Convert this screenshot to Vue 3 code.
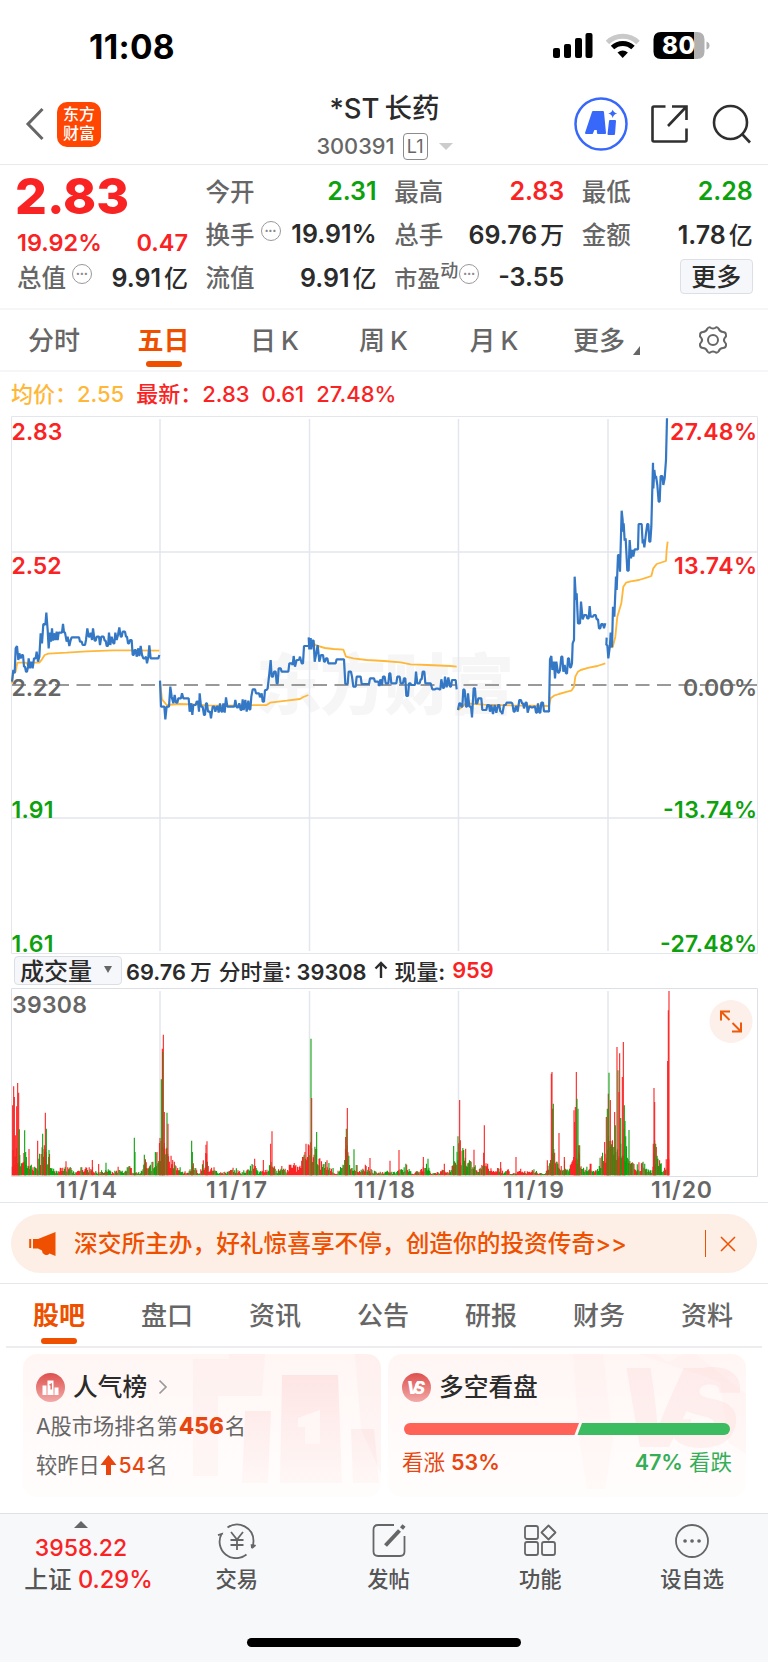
<script setup>
import { ref } from "vue";

const periods = ["分时", "五日", "日 K", "周 K", "月 K", "更多"];
const activePeriod = ref("五日");
const sections = ["股吧", "盘口", "资讯", "公告", "研报", "财务", "资料"];
const activeSection = ref("股吧");

// chart data is kept in thirds of a pixel
const days = [
    [36, 815, 40, 780, 44, 790, 47, 715, 51, 708, 55, 750, 58, 730, 62, 745, 66, 735, 72, 770, 78, 785, 84, 770, 86, 745, 90, 775, 94, 755, 98, 775, 102, 745, 110, 725, 114, 755, 118, 740, 122, 670, 126, 700, 130, 642, 136, 645, 139, 608, 143, 660, 146, 715, 150, 668, 153, 695, 156, 655, 159, 692, 162, 670, 166, 690, 170, 665, 173, 690, 176, 668, 186, 668, 189, 642, 192, 667, 195, 668, 200, 695, 203, 680, 208, 708, 212, 690, 215, 682, 232, 682, 240, 695, 248, 705, 258, 690, 262, 655, 266, 680, 272, 668, 276, 690, 279, 655, 284, 692, 290, 680, 300, 705, 304, 680, 314, 692, 320, 708, 327, 668, 331, 705, 335, 680, 340, 700, 346, 668, 350, 690, 354, 675, 358, 652, 362, 680, 368, 665, 378, 680, 384, 700, 390, 690, 398, 735, 404, 720, 410, 740, 415, 715, 418, 738, 422, 708, 426, 735, 430, 745, 438, 740, 441, 760, 445, 740, 448, 706, 452, 745, 475, 745, 478, 735],
    [480, 812, 483, 890, 490, 890, 496, 928, 500, 890, 507, 890, 511, 830, 515, 860, 520, 880, 524, 855, 528, 878, 535, 865, 546, 850, 550, 865, 563, 865, 569, 905, 574, 880, 577, 915, 580, 885, 590, 875, 597, 905, 599, 850, 603, 890, 608, 890, 612, 915, 618, 880, 624, 905, 633, 925, 638, 890, 646, 905, 650, 890, 656, 908, 660, 880, 664, 905, 670, 880, 674, 908, 678, 862, 682, 890, 700, 890, 706, 870, 710, 892, 718, 880, 722, 900, 728, 868, 731, 900, 736, 870, 740, 905, 745, 872, 748, 898, 754, 860, 758, 838, 768, 850, 780, 862, 785, 850, 788, 875, 795, 840, 803, 835, 808, 790, 812, 750, 815, 800, 822, 785, 830, 820, 836, 775, 845, 785, 862, 785, 868, 760, 878, 765, 881, 738, 885, 770, 890, 750, 900, 740, 905, 760, 912, 708, 924, 708],
    [926, 682, 928, 718, 932, 684, 934, 718, 937, 692, 944, 755, 948, 735, 953, 705, 958, 755, 963, 735, 972, 755, 978, 745, 985, 760, 1000, 760, 1010, 748, 1032, 748, 1036, 822, 1046, 785, 1056, 800, 1060, 830, 1070, 800, 1085, 822, 1100, 822, 1110, 805, 1125, 815, 1138, 828, 1141, 808, 1146, 825, 1149, 800, 1157, 820, 1168, 790, 1174, 820, 1192, 800, 1202, 820, 1212, 805, 1219, 858, 1227, 820, 1234, 825, 1248, 785, 1252, 820, 1262, 808, 1268, 785, 1276, 820, 1292, 820, 1297, 838, 1308, 836, 1318, 838, 1324, 808, 1329, 834, 1335, 800, 1340, 832, 1345, 802, 1350, 830, 1356, 810, 1370, 838],
    [1374, 900, 1378, 880, 1384, 890, 1390, 838, 1394, 840, 1398, 890, 1404, 850, 1408, 890, 1416, 922, 1421, 835, 1428, 880, 1435, 865, 1447, 900, 1462, 885, 1470, 905, 1474, 885, 1479, 912, 1484, 885, 1489, 908, 1494, 885, 1501, 905, 1507, 912, 1512, 885, 1520, 878, 1537, 880, 1541, 905, 1547, 890, 1553, 905, 1558, 870, 1566, 880, 1572, 895, 1577, 878, 1583, 908, 1588, 890, 1594, 892, 1602, 890, 1608, 908, 1614, 880, 1618, 908, 1624, 878, 1632, 904, 1647, 905, 1650, 748, 1654, 738, 1657, 780, 1662, 755, 1665, 805, 1669, 755, 1674, 788, 1680, 780, 1684, 740, 1690, 785, 1694, 765, 1698, 790, 1704, 745, 1710, 772, 1716, 760, 1718, 700, 1722, 690, 1724, 500, 1728, 570, 1730, 550, 1734, 640, 1743, 575, 1748, 628, 1753, 615, 1762, 625, 1769, 588, 1772, 620, 1782, 615, 1790, 628, 1794, 628, 1797, 655, 1804, 642, 1812, 655, 1816, 640],
    [1820, 683, 1819, 705, 1825, 745, 1830, 705, 1832, 668, 1836, 712, 1839, 590, 1843, 620, 1848, 500, 1850, 540, 1854, 435, 1860, 485, 1865, 302, 1868, 330, 1869, 365, 1871, 340, 1874, 392, 1877, 385, 1882, 482, 1889, 390, 1893, 445, 1897, 420, 1900, 440, 1904, 418, 1914, 418, 1916, 342, 1922, 342, 1928, 400, 1930, 388, 1933, 412, 1938, 370, 1942, 342, 1948, 395, 1954, 350, 1959, 158, 1960, 235, 1963, 180, 1966, 205, 1968, 198, 1972, 225, 1976, 275, 1982, 198, 1990, 225, 1994, 205, 1998, 150, 2001, 25],
];

const averages = [
    "36,820 40,790 47,785 52,758 78,758 82,762 100,758 118,758 126,748 134,735 145,731 200,728 260,724 340,721 400,721 478,722",
    "480,815 486,868 500,885 540,882 600,884 615,886 680,887 720,886 800,885 810,878 860,872 900,867 910,861 925,855",
    "928,690 940,700 948,706 975,714 1000,717 1030,719 1038,740 1060,745 1100,750 1152,753 1202,757 1232,763 1282,765 1352,768 1370,770",
    "1374,900 1387,890 1397,880 1452,884 1532,886 1647,888 1652,865 1662,857 1677,852 1702,845 1714,842 1722,830 1726,800 1734,785 1742,780 1767,773 1792,768 1816,760",
    "1826,710 1838,712 1846,680 1852,620 1864,580 1870,530 1878,518 1892,514 1917,510 1942,502 1954,498 1960,475 1970,462 1998,453 2000,420 2003,395",
];

function makeRandom(seed) {
    return () => {
        seed = (seed * 16807) % 2147483647;
        return seed / 2147483647;
    };
}

function stepPoints(list) {
    const out = [];
    for (let i = 0; i < list.length; i += 2) {
        const x = list[i];
        const y = list[i + 1];
        if (i > 0 && x - list[i - 2] > 5) {
            out.push(`${x - 3},${list[i - 1]}`);
        }
        out.push(`${x},${y}`);
    }
    return out.join(" ");
}

// volume: x, ceiling of the small bars, share of green bars
const floor = [
    [36, 80, 0.3], [60, 85, 0.5], [80, 70, 0.6], [96, 30, 0.5], [112, 25, 0.4], [122, 100, 0.5], [150, 60, 0.7], [166, 12, 0.5],
    [185, 30, 0.2], [205, 30, 0.5], [225, 10, 0.3], [245, 25, 0.2], [262, 25, 0.3], [275, 30, 0.2], [290, 10, 0.5], [325, 25, 0.4],
    [340, 8, 0.5], [360, 32, 0.3], [372, 10, 0.5], [390, 35, 0.5], [400, 8, 0.5], [420, 10, 0.5], [436, 50, 0.5], [445, 20, 0.3],
    [460, 45, 0.5], [478, 110, 0.4], [505, 80, 0.4], [520, 50, 0.4], [540, 25, 0.7], [550, 10, 0.2], [565, 20, 0.4], [577, 45, 0.6],
    [595, 6, 0.5], [612, 50, 0.5], [620, 80, 0.2], [626, 15, 0.2], [642, 35, 0.2], [652, 8, 0.5], [680, 12, 0.3], [705, 25, 0.3],
    [725, 8, 0.5], [740, 25, 0.3], [760, 48, 0.2], [775, 12, 0.5], [805, 18, 0.2], [815, 60, 0.3], [830, 14, 0.6], [848, 30, 0.4],
    [862, 20, 0.3], [872, 45, 0.2], [895, 26, 0.3], [908, 55, 0.1], [925, 115, 0.1], [946, 85, 0.6], [960, 50, 0.4], [980, 45, 0.5],
    [1000, 22, 0.2], [1010, 8, 0.5], [1027, 32, 0.2], [1040, 110, 0.4], [1052, 40, 0.5], [1066, 38, 0.4], [1080, 14, 0.3], [1100, 35, 0.4],
    [1112, 20, 0.2], [1130, 10, 0.4], [1160, 14, 0.3], [1190, 10, 0.5], [1218, 40, 0.4], [1235, 8, 0.5], [1260, 15, 0.4], [1282, 45, 0.7],
    [1292, 8, 0.3], [1320, 10, 0.4], [1333, 25, 0.3], [1345, 12, 0.5], [1362, 35, 0.5], [1378, 100, 0.4], [1395, 65, 0.6], [1415, 50, 0.5],
    [1435, 14, 0.5], [1452, 40, 0.4], [1470, 30, 0.2], [1485, 12, 0.2], [1500, 30, 0.3], [1512, 8, 0.3], [1520, 25, 0.2], [1535, 3, 0.5],
    [1560, 20, 0.2], [1580, 12, 0.4], [1600, 20, 0.3], [1615, 8, 0.6], [1636, 4, 0.5], [1648, 40, 0.3], [1660, 80, 0.6], [1675, 30, 0.6],
    [1694, 45, 0.5], [1705, 15, 0.4], [1720, 60, 0.3], [1738, 80, 0.7], [1750, 25, 0.6], [1770, 45, 0.5], [1785, 15, 0.7], [1800, 50, 0.4],
    [1815, 80, 0.3], [1830, 130, 0.5], [1845, 120, 0.5], [1870, 150, 0.6], [1888, 75, 0.6], [1905, 28, 0.3], [1925, 45, 0.5], [1945, 30, 0.3],
    [1955, 15, 0.3], [1964, 110, 0.5], [1978, 45, 0.6], [1990, 24, 0.6], [2004, 60, 0.1],
];

const r = 0;
const g = 1;
const peaks = [
    [38, 210, r], [41, 267, r], [43, 235, r], [46, 120, r], [50, 207, r], [53, 277, r], [56, 248, r], [58, 138, g], [74, 135, g], [77, 70, g],
    [87, 79, r], [113, 104, r], [128, 125, g], [133, 90, r], [136, 188, r], [139, 140, g], [147, 76, g], [198, 42, r], [277, 46, r], [296, 34, r],
    [318, 38, g], [403, 113, g], [405, 70, g], [433, 62, g], [468, 68, g], [480, 112, r], [484, 288, g], [487, 380, r], [488, 370, g], [490, 422, r],
    [493, 190, r], [501, 188, g], [504, 155, r], [575, 104, g], [577, 70, g], [618, 92, r], [621, 102, r], [764, 50, r], [790, 46, r], [812, 95, r],
    [816, 132, r], [918, 95, r], [933, 410, g], [935, 232, r], [950, 130, g], [981, 45, r], [1037, 115, r], [1039, 140, g], [1042, 202, r],
    [1062, 78, g], [1110, 52, r], [1170, 44, r], [1197, 76, r], [1270, 55, r], [1284, 50, g], [1333, 35, r], [1361, 88, g], [1374, 117, g],
    [1379, 226, r], [1381, 105, r], [1397, 80, r], [1422, 77, r], [1451, 68, r], [1453, 150, r], [1502, 40, r], [1548, 55, r], [1642, 45, r],
    [1654, 305, r], [1656, 310, r], [1658, 200, r], [1660, 215, g], [1677, 127, r], [1693, 55, r], [1722, 195, r], [1724, 160, r], [1726, 205, r],
    [1729, 310, r], [1731, 230, g], [1734, 200, g], [1736, 90, r], [1739, 90, g], [1814, 100, r], [1819, 175, r], [1822, 200, g], [1825, 245, r],
    [1827, 308, g], [1831, 226, r], [1844, 190, r], [1846, 150, g], [1851, 385, r], [1854, 315, g], [1857, 250, r], [1859, 366, r], [1862, 172, g],
    [1867, 295, r], [1870, 400, r], [1873, 210, g], [1875, 163, g], [1887, 136, g], [1960, 95, r], [1962, 262, r], [1964, 220, r], [1967, 95, g],
    [2003, 343, r], [2005, 495, r], [2007, 553, r],
];

function floorAt(x) {
    let i = 1;
    while (i < floor.length - 1 && floor[i][0] < x) i++;
    const [x0, h0, s0] = floor[i - 1];
    const [x1, h1, s1] = floor[i];
    const t = Math.min(1, (x - x0) / (x1 - x0));
    return { top: h0 + (h1 - h0) * t, green: s0 + (s1 - s0) * t };
}

function buildVolume() {
    const random = makeRandom(4211);
    const paths = ["", ""];
    for (let x = 37; x < 2008; x += 2.48) {
        const { top, green } = floorAt(x);
        const height = Math.max(4, top * (0.3 + 0.75 * random()));
        paths[random() < green ? g : r] += `M${x.toFixed(1)} 1156v-${height.toFixed(0)}`;
    }
    return paths;
}
const volume = buildVolume();
const dates = [
    [56, "11/14"],
    [206, "11/17"],
    [354, "11/18"],
    [503, "11/19"],
    [651, "11/20"],
];
</script>

<template>
    <div class="page">
        <div class="status">
            <span class="time">11:08</span>
            <svg class="signals" width="160" height="30" viewBox="551 31 160 30">
                <rect x="553" y="48" width="7" height="10" rx="2" />
                <rect x="564" y="44" width="7" height="14" rx="2" />
                <rect x="575" y="38" width="7" height="20" rx="2" />
                <rect x="585.500" y="33" width="7" height="25" rx="2" />
                <path d="M607.500 42.500a22 22 0 0 1 30.500 0" fill="none" stroke="#c9c9c9" stroke-width="5" />
                <path d="M612.500 47.500a15 15 0 0 1 20.500 0" fill="none" stroke="#000" stroke-width="5" />
                <path d="M617.500 52.500q5.200-4.200 10.400 0l-5.200 5.500z" />
                <path d="M694 32h3q7.500 0 7.500 7.500v12q0 7.500-7.500 7.500h-3z" fill="#b1b1b1" />
                <path d="M694 32h-33q-7.500 0-7.500 7.500v12q0 7.500 7.500 7.500h33z" />
                <path d="M706.500 41.500q3 1 3 4t-3 4z" fill="#b1b1b1" />
                <text x="662" y="54" class="battery" textLength="33">80</text>
            </svg>
        </div>

        <header class="header">
            <div class="side">
                <svg class="back" width="20" height="34" viewBox="0 0 20 34"><path d="M17.500 2 3 17l14.500 15" /></svg>
                <div class="logo"><span>东方</span><span>财富</span></div>
            </div>
            <div class="stock">
                <div class="name">*ST<span>长药</span></div>
                <div class="code">
                    300391<span class="level">L1</span><i class="caret"></i>
                </div>
            </div>
            <div class="side tools">
                <svg width="54" height="54" viewBox="0 0 54 54">
                    <circle cx="27" cy="27" r="25.500" fill="none" stroke="#3768fa" stroke-width="2.500" />
                    <path d="M12 36 19 15h10l2 21h-7l-.3-4h-4L18 36zM21.300 27h2.200l-.3-5.500z" fill="#3768fa" stroke="#3768fa" stroke-width="2" stroke-linejoin="round" fill-rule="evenodd" />
                    <path d="M36 24h5l-1 13h-5.500z" fill="#3768fa" stroke="#3768fa" stroke-width="2" stroke-linejoin="round" />
                    <path d="M38.700 12.500q.8 3.200 4.500 4-3.700.8-4.500 4.500-.8-3.700-4.500-4.500 3.700-.8 4.500-4z" fill="#3768fa" />
                </svg>
                <svg class="share" width="38" height="40" viewBox="0 0 38 40">
                    <path d="M15.500 2.500H4q-1.500 0-1.500 1.500v32q0 1.500 1.500 1.500h31q1.500 0 1.500-1.500V24.500M22 2.500h14.500V16M36.500 2.500 18 22" />
                </svg>
                <svg class="search" width="40" height="40" viewBox="0 0 40 40">
                    <circle cx="18.500" cy="18.500" r="16.500" /><path d="m30 30 8 8.500" />
                </svg>
            </div>
        </header>

        <section class="quote">
            <div class="main">
                <div class="price">2.83</div>
                <div class="change"><span>19.92%</span><span>0.47</span></div>
            </div>
            <div class="cell"><label>今开</label><b class="down">2.31</b></div>
            <div class="cell"><label>最高</label><b class="up">2.83</b></div>
            <div class="cell"><label>最低</label><b class="down">2.28</b></div>
            <div class="cell">
                <label>换手<i class="more-dot">•••</i></label><b>19.91%</b>
            </div>
            <div class="cell"><label>总手</label><b>69.76<em>万</em></b></div>
            <div class="cell"><label>金额</label><b>1.78<em>亿</em></b></div>
            <div class="cell">
                <label>总值<i class="more-dot">•••</i></label><b>9.91<em>亿</em></b>
            </div>
            <div class="cell"><label>流值</label><b>9.91<em>亿</em></b></div>
            <div class="cell">
                <label class="pe">市盈<sup>动</sup><i class="more-dot">•••</i></label><b>-3.55</b>
            </div>
            <div class="cell end"><button class="more">更多</button></div>
        </section>

        <nav class="periods">
            <span
                v-for="p in periods"
                :key="p"
                :class="['period', { active: p === activePeriod }]"
                @click="activePeriod = p"
            >{{ p }}<i v-if="p === '更多'" class="corner"></i></span>
            <svg class="gear" width="32" height="30" viewBox="0 0 32 30">
                <path d="M10.500 3.500q1.500-2 3.500-.5 2 1.200 4 0 2-1.500 3.500.5 1.500 3.500 4.500 3.500 2.500 0 3 2.500.5 2-1.200 3.300-1.800 2.200 0 4.400 1.700 1.300 1.200 3.300-.5 2.500-3 2.500-3 0-4.500 3.500-1.500 2-3.500.5-2-1.200-4 0-2 1.500-3.500-.5-1.500-3.500-4.500-3.500-2.500 0-3-2.500-.5-2 1.200-3.300 1.800-2.200 0-4.400Q2.500 11.500 3 9.500 3.500 7 6 7q3 0 4.500-3.500z" />
                <circle cx="16" cy="15" r="5" />
            </svg>
        </nav>

        <div class="legend">
            <span class="avg">均价：</span><span class="avg v1">2.55</span>
            <span class="v2">最新：</span><span class="v3">2.83</span><span class="v4">0.61</span><span>27.48%</span>
        </div>

        <svg class="chart" width="768" height="542" viewBox="0 414 768 542">
            <text class="watermark" x="256" y="709" textLength="258">东方财富</text>
            <g class="grid">
                <path d="M11.500 416.500h746v537h-746z" />
                <path d="M160 419v532M309.500 419v532M458.500 419v532M608 419v532M11.500 552h746M11.500 818h746" stroke-width="1.500" />
            </g>
            <path class="zero" d="M12 685h746" />
            <g transform="translate(0 410) scale(.33333)" fill="none" stroke-linejoin="bevel">
                <polyline v-for="(a, i) in averages" :key="'a' + i" :points="a" class="average" />
                <polyline v-for="(d, i) in days" :key="'d' + i" :points="stepPoints(d)" class="line" />
            </g>
            <g class="axis">
                <text x="11.500" y="440" textLength="51" class="up">2.83</text>
                <text x="11.500" y="574" textLength="50" class="up">2.52</text>
                <text x="11.500" y="696" textLength="50">2.22</text>
                <text x="11.500" y="818" textLength="42" class="down">1.91</text>
                <text x="11.500" y="952" textLength="42" class="down">1.61</text>
                <text x="670" y="440" textLength="87" class="up">27.48%</text>
                <text x="674" y="574" textLength="83" class="up">13.74%</text>
                <text x="683" y="696" textLength="74">0.00%</text>
                <text x="663" y="818" textLength="94" class="down">-13.74%</text>
                <text x="660" y="952" textLength="97" class="down">-27.48%</text>
            </g>
        </svg>

        <div class="volume-bar">
            <span class="select">成交量<i></i></span>
            <span class="t1">69.76<em>万</em></span>
            <span class="t2">分时量: 39308</span>
            <svg width="14" height="20" viewBox="0 0 14 20"><path d="M7 18V3M1.500 8.500 7 3l5.500 5.500" /></svg>
            <span class="t3">现量:</span>
            <span class="up">959</span>
        </div>

        <div class="volume">
            <svg width="768" height="216" viewBox="0 986 768 216">
                <g class="grid">
                    <path d="M11.500 988.500h746v188h-746z" stroke="#dcdfe6" />
                    <path d="M160 991v185M309.500 991v185M458.500 991v185M608 991v185" stroke-width="1.500" />
                </g>
                <g transform="translate(0 790) scale(.33333)" fill="none" stroke-width="3.300">
                    <path :d="volume[0]" stroke="#fa2323" />
                    <path :d="volume[1]" stroke="#0da10d" />
                    <path
                        v-for="(p, i) in peaks"
                        :key="i"
                        :d="`M${p[0]} 1156v-${p[1]}`"
                        :stroke="p[2] ? '#0da10d' : '#fa2323'"
                    />
                </g>
                <g class="axis">
                    <text x="12" y="1013" textLength="75">39308</text>
                    <text v-for="d in dates" :key="d[1]" :x="d[0]" y="1198" textLength="61">{{ d[1] }}</text>
                </g>
                <circle cx="731" cy="1021.500" r="21.500" fill="#fdefe9" />
                <path d="M721 1020.500v-9h9M721 1011.500l8.500 8.500M741 1022.500v9h-9M741 1031.500l-8.500-8.500" fill="none" stroke="#ee5a0c" stroke-width="2" />
            </svg>
        </div>

        <div class="notice-wrap">
            <div class="notice">
                <svg width="28" height="26" viewBox="0 0 28 26">
                    <path d="M1.200 8v9" stroke="#ee5000" stroke-width="2" />
                    <path d="M4 8h5L26.500 1v24l-6-2.500q-2 2.500-5 1-2.500-1-2.500-4L9 17.500H4z" fill="#ee5000" />
                </svg>
                <span class="notice-text">深交所主办，好礼惊喜享不停，创造你的投资传奇&gt;&gt;</span>
                <i class="bar"></i>
                <svg width="18" height="18" viewBox="0 0 18 18"><path d="m2 2 14 14M16 2 2 16" stroke="#ee5000" stroke-width="1.500" /></svg>
            </div>
        </div>

        <nav class="sections">
            <span
                v-for="s in sections"
                :key="s"
                :class="{ active: s === activeSection }"
                @click="activeSection = s"
            >{{ s }}</span>
        </nav>

        <section class="cards">
            <div class="card">
                <svg class="deco" width="358" height="143" viewBox="0 0 358 143">
                    <defs>
                        <linearGradient id="fade" x1="0" y1="0" x2="0" y2="1">
                            <stop offset="0" stop-color="#f58f8f" stop-opacity=".17" />
                            <stop offset="1" stop-color="#f58f8f" stop-opacity=".05" />
                        </linearGradient>
                        <linearGradient id="badge" x1="0" y1="0" x2="0" y2="1">
                            <stop offset="0" stop-color="#de504e" />
                            <stop offset="1" stop-color="#f2aaa8" />
                        </linearGradient>
                    </defs>
                    <path d="M170 5h36V0h36l-3 42h-44v80h-25zM332 0h26v120l-20-45z" fill="#f58f8f" opacity=".05" />
                    <path d="M222 57h26l-3 72h-26zM259 21h56l4 108h-62zM328 75h23l5 54h-26z" fill="url(#fade)" />
                    <path d="m275 64 22-8v34h-15V73h-7z" fill="#fff7f5" />
                </svg>
                <div class="card-title">
                    <svg width="29" height="29" viewBox="0 0 29 29">
                        <circle cx="14.500" cy="14.500" r="14.500" fill="url(#badge)" />
                        <path d="M6.500 12.500h4V22h-4zM11.500 7.500h6V22h-6zM18.500 14.500h4V22h-4z" fill="#fff" />
                        <path d="m13.500 12.200 1.700-1v5.300" fill="none" stroke="#e07270" stroke-width="1.500" />
                    </svg>
                    <span>人气榜</span>
                    <svg class="go" width="10" height="16" viewBox="0 0 10 16"><path d="m1.500 1.500 6.500 6.500-6.500 6.500" /></svg>
                </div>
                <div class="rank">A股市场排名第<b>456</b>名</div>
                <div class="rank second">
                    较昨日<svg width="17" height="20" viewBox="0 0 17 20"><path d="M8.500 0 16.500 10H11v10H6V10H.5z" fill="#e8450f" /></svg><span>54</span>名
                </div>
            </div>
            <div class="card vote-card">
                <svg class="deco" width="358" height="143" viewBox="0 0 358 143">
                    <path d="M185 0h30l10 85-8 50h-18l-8-50zM250 0h18l12 8 16-8h12l50 40v60l-18-12-8-60z" fill="#f58f8f" opacity=".04" />
                    <text class="deco-vs" x="228" y="93" textLength="124">VS</text>
                </svg>
                <div class="card-title">
                    <svg width="29" height="29" viewBox="0 0 29 29">
                        <circle cx="14.500" cy="14.500" r="14.500" fill="url(#badge)" />
                        <text class="vs" x="4.500" y="21" textLength="18.500">VS</text>
                    </svg>
                    <span>多空看盘</span>
                </div>
                <svg class="ratio" width="328" height="14" viewBox="0 0 328 14">
                    <path d="M7 1h169l-4.500 12H7a6 6 0 0 1 0-12z" fill="#ff6357" />
                    <path d="M179 1h142a6 6 0 0 1 0 12H174.500z" fill="#3cbc60" />
                </svg>
                <div class="votes">
                    <span class="bull">看涨 <b>53%</b></span>
                    <span class="bear"><b>47%</b> 看跌</span>
                </div>
            </div>
        </section>

        <footer class="footer">
            <div class="index">
                <i></i>
                <div class="up">3958.22</div>
                <div class="market">上证 <span class="up">0.29%</span></div>
            </div>
            <div class="item">
                <svg width="40" height="36" viewBox="0 0 40 36">
                    <path d="M10.500 4.500A16.500 16.500 0 0 1 36.500 18q0 4-1.500 7l3.500-3M29.500 31.500A16.500 16.500 0 0 1 4.500 11L1 12.200 6 10.500M35 25.200l-.5-4" />
                    <path d="m14 9 6 7.500L26 9M20 16.500V27M13.500 17h13M13.500 22h13" />
                </svg>
                <span>交易</span>
            </div>
            <div class="item">
                <svg width="36" height="36" viewBox="0 0 36 36">
                    <path d="M23 2H7Q2.500 2 2.500 6.500v22Q2.500 33 7 33h22q4.500 0 4.500-4.500V13" />
                    <path d="M14.500 22.500 28.500 7.500" stroke-width="4" />
                    <path d="m30.500 5.500 2.500-3" stroke-width="4" />
                </svg>
                <span>发帖</span>
            </div>
            <div class="item">
                <svg width="36" height="36" viewBox="0 0 36 36">
                    <rect x="3" y="3" width="13" height="13" rx="2" />
                    <rect x="3" y="19" width="13" height="13" rx="2" />
                    <rect x="20" y="19" width="13" height="13" rx="2" />
                    <path d="m26.500 2.500 7 7-7 7-7-7z" stroke-linejoin="round" />
                </svg>
                <span>功能</span>
            </div>
            <div class="item">
                <svg width="36" height="36" viewBox="0 0 36 36">
                    <circle cx="18" cy="18" r="16" />
                    <path d="M11 18h.1M18 18h.1M25 18h.1" stroke-width="3.600" stroke-linecap="round" />
                </svg>
                <span>设自选</span>
            </div>
            <div class="home"></div>
        </footer>
    </div>
</template>

<style>
body {
    margin: 0;
    background: #fff;
}
</style>

<style scoped>
.page {
    width: 768px;
    height: 1662px;
    display: flex;
    flex-direction: column;
    overflow: hidden;
    background: #fff;
    color: #2b2b2b;
    font-family: Inter, "Noto Sans CJK SC", sans-serif;
    font-weight: 500;
}

.page > * {
    flex: none;
    box-sizing: border-box;
}

i,
em {
    font-style: normal;
}

.up {
    color: #fa2323;
    fill: #fa2323;
}

.down {
    color: #0da10d;
    fill: #0da10d;
}

.status {
    height: 84px;
    padding: 31px 57px 0 89px;
    display: flex;
    justify-content: space-between;
    align-items: flex-start;
}

.time {
    margin-top: 1px;
    font-size: 33.5px;
    line-height: 30px;
    font-weight: 700;
    letter-spacing: 0.3px;
    color: #000;
}

.battery {
    fill: #fff;
    font-size: 24px;
    font-weight: 800;
}

.header {
    height: 81px;
    padding: 0 16px 0 25px;
    display: grid;
    grid-template-columns: 225px 1fr 233px;
    border-bottom: 1px solid #e9e9ec;
}

.side {
    display: flex;
    align-items: center;
}

.back path {
    fill: none;
    stroke: #666;
    stroke-width: 3;
}

.logo {
    width: 44px;
    height: 45px;
    margin-left: 12px;
    border-radius: 10px;
    background: #ff4602;
    color: #fff;
    display: flex;
    flex-direction: column;
    align-items: center;
    justify-content: center;
    font-size: 16px;
    line-height: 19px;
    font-weight: 500;
}

.stock {
    text-align: center;
    white-space: nowrap;
}

.name {
    margin-top: 8px;
    font-size: 27.5px;
    line-height: 33px;
}

.name span {
    margin-left: 5px;
}

.code {
    margin-top: 8px;
    display: flex;
    align-items: center;
    justify-content: center;
    color: #666;
    font-size: 21.8px;
    line-height: 27px;
}

.level {
    width: 23px;
    height: 25px;
    margin: 0 11px 0 8px;
    border: 1.5px solid #8b8b8b;
    border-radius: 4px;
    font-size: 18px;
    line-height: 25px;
    font-weight: 400;
}

.caret {
    border: 7px solid transparent;
    border-top-color: #ccc;
    border-bottom: 0;
}

.tools {
    justify-content: flex-end;
}

.share {
    margin: 0 24px 0 22px;
}

.share path,
.search {
    fill: none;
    stroke: #2f2f2f;
    stroke-width: 2.6;
}

.quote {
    height: 145px;
    padding: 4px 15px 12px 17px;
    display: grid;
    grid-template-columns: 171px 171px 170px 171px;
    grid-template-rows: repeat(3, 43px);
    column-gap: 17.6px;
    border-bottom: 2px solid #f6f6f8;
}

.main {
    grid-row: 1 / 3;
    color: #fa2323;
}

.price {
    margin: 2px 0 0 -2px;
    font-size: 50px;
    line-height: 50px;
    font-weight: 800;
}

.change {
    margin-top: 8px;
    display: flex;
    justify-content: space-between;
    font-size: 23.5px;
    line-height: 28px;
    font-weight: 560;
}

.cell {
    display: flex;
    justify-content: space-between;
    align-items: center;
    white-space: nowrap;
}

.cell label {
    color: #666;
    font-size: 24.5px;
    display: flex;
    align-items: center;
}

.cell b {
    font-size: 25px;
    font-weight: 590;
}

.cell em {
    margin-left: 3px;
    font-size: 24px;
    font-weight: 500;
}

.more-dot {
    width: 18px;
    height: 18px;
    margin: -6px 0 0 6px;
    border: 1.5px solid #999;
    border-radius: 50%;
    color: #888;
    font-size: 7px;
    line-height: 18px;
    text-align: center;
    letter-spacing: 0.2px;
}

.pe sup {
    margin-top: -12px;
    font-size: 18px;
    line-height: 18px;
}

.cell .pe {
    font-size: 23px;
}

.pe .more-dot {
    margin-left: 1px;
}

.cell.end {
    justify-content: flex-end;
}

.more {
    width: 73px;
    height: 35px;
    padding: 0;
    border: 1px solid #dcdfe6;
    border-radius: 4px;
    background: #f6f7fa;
    color: #2b2b2b;
    font: inherit;
    font-size: 25px;
    line-height: 32px;
}

.periods {
    height: 62px;
    padding-right: 1px;
    display: grid;
    grid-template-columns: 108px 111px 111px 107px 114px 96px 1fr;
    align-items: start;
    border-bottom: 2px solid #f6f6f8;
    color: #666;
    font-size: 26px;
    line-height: 61px;
}

.period {
    position: relative;
    text-align: center;
    word-spacing: -2px;
}

.period.active {
    color: #ee5000;
    font-weight: 700;
}

.period.active::after,
.sections .active::after {
    content: "";
    position: absolute;
    left: 50%;
    bottom: 4px;
    width: 36px;
    height: 6px;
    margin-left: -18px;
    border-radius: 3px;
    background: #ee5000;
}

.corner {
    position: absolute;
    right: 7px;
    bottom: 16px;
    border-left: 7px solid transparent;
    border-bottom: 9px solid #666;
}

.gear {
    margin: 15px 0 0 50px;
    fill: none;
    stroke: #666;
    stroke-width: 2;
}

.legend {
    height: 42px;
    padding: 1px 11px 0;
    display: flex;
    color: #fa2323;
    font-size: 22px;
    line-height: 42px;
    font-weight: 540;
}

.legend span {
    white-space: nowrap;
}

.avg {
    color: #ffb73a;
}

.v1 {
    margin-right: 12px;
}

.v3,
.v4 {
    margin-right: 12px;
}

.chart {
    display: block;
    overflow: visible;
}

.grid {
    fill: none;
    stroke: #e4e6ed;
}

.zero {
    stroke: #999;
    stroke-width: 1.9;
    stroke-dasharray: 14 7.5;
}

.average {
    stroke: #ffb73a;
    stroke-width: 5.5;
}

.line {
    stroke: #3377c5;
    stroke-width: 6.6;
}

.watermark {
    fill: #f6f6f6;
    font-size: 66px;
    font-weight: 900;
}

.axis {
    font-size: 23px;
    font-weight: 560;
    fill: #666;
}

.volume-bar {
    height: 30px;
    padding: 0 0 2px 14px;
    display: flex;
    align-items: center;
    font-size: 21.8px;
    font-weight: 560;
    white-space: nowrap;
}

.volume-bar svg {
    margin: 0 7px 0 7px;
    fill: none;
    stroke: #2b2b2b;
    stroke-width: 2.4;
}

.select {
    width: 108px;
    height: 29px;
    margin: 1px 4px 0 0;
    padding: 0 0 2px 5px;
    box-sizing: border-box;
    display: flex;
    align-items: center;
    border: 1px solid #dcdfe6;
    border-radius: 4px;
    background: #f6f7fa;
    font-size: 24px;
    font-weight: 500;
}

.select i {
    margin-left: 12px;
    border: 4.5px solid transparent;
    border-top: 7px solid #666;
    border-bottom: 0;
}

.t1,
.t3 {
    margin-right: 7px;
}

.t1 em {
    margin-left: 4px;
}

.volume {
    height: 217px;
    border-bottom: 1px solid #e4e6ed;
}

.volume svg {
    display: block;
    overflow: visible;
}

.notice-wrap {
    height: 81px;
    padding: 11px 11px 10px;
    border-bottom: 1px solid #e8e8ea;
}

.notice {
    height: 59px;
    padding: 0 20px 0 18px;
    border-radius: 30px;
    background: #fdeee6;
    display: flex;
    align-items: center;
}

.notice-text {
    flex: 1;
    margin: -3px 0 0 17px;
    color: #ee5000;
    font-size: 23.7px;
    white-space: nowrap;
}

.bar {
    width: 1.5px;
    height: 27px;
    margin-right: 13px;
    background: #ee5000;
}

.sections {
    height: 64px;
    margin: 0 6px;
    display: grid;
    grid-template-columns: repeat(7, 108px);
    border-bottom: 2px solid #ededf0;
    color: #666;
    font-size: 26px;
    line-height: 63px;
    text-align: center;
}

.sections span {
    position: relative;
    left: -1px;
}

.sections .active {
    color: #ee5000;
    font-weight: 700;
}

.sections .active::after {
    bottom: 3px;
}

.cards {
    height: 165px;
    padding: 6px 22px 0 23px;
    display: grid;
    grid-template-columns: 358px 358px;
    gap: 7px;
}

.card {
    position: relative;
    height: 143px;
    padding: 18px 14px 0 13px;
    box-sizing: border-box;
    border-radius: 14px;
    background: linear-gradient(#fff6f4, #fffbfa 60%, #fffdfc);
    overflow: hidden;
}

.vote-card {
    padding-left: 14px;
}

.card > * {
    position: relative;
}

.card .deco {
    position: absolute;
    left: 0;
    top: 0;
}

.deco-vs {
    fill: #f58f8f;
    opacity: 0.1;
    font-size: 108px;
    font-weight: 900;
    font-style: italic;
}

.card-title {
    height: 30px;
    display: flex;
    align-items: center;
    font-size: 24.7px;
    line-height: 30px;
}

.card-title span {
    margin-left: 8px;
}

.go {
    margin-left: 11px;
    fill: none;
    stroke: #999;
    stroke-width: 1.7;
}

.vs {
    fill: #fff;
    font-size: 17px;
    font-weight: 800;
    font-style: italic;
}

.rank {
    margin-top: 8px;
    display: flex;
    align-items: center;
    color: #666;
    font-size: 21.2px;
    line-height: 32px;
    font-weight: 400;
}

.rank b {
    margin: 0 1px;
    color: #e8450f;
    font-size: 22.5px;
    font-weight: 800;
}

.rank.second {
    margin-top: 7px;
}

.rank span {
    margin: 0 1px 0 2px;
    color: #e8450f;
    font-weight: 500;
}

.ratio {
    display: block;
    margin: 20px 0 0 1px;
}

.votes {
    margin-top: 11px;
    display: flex;
    justify-content: space-between;
    font-size: 21.5px;
    line-height: 30px;
    font-weight: 400;
}

.votes b {
    font-weight: 600;
}

.bull {
    color: #e8450f;
}

.bear {
    color: #35ae58;
}

.footer {
    height: 151px;
    padding-top: 7px;
    display: grid;
    grid-template-columns: 161px repeat(4, 1fr);
    grid-template-rows: 117px 1fr;
    border-top: 1px solid #e0e1e5;
    background: #f7f8fa;
    color: #555;
    font-size: 21.3px;
    text-align: center;
}

.index {
    padding-left: 18px;
    display: flex;
    flex-direction: column;
    align-items: center;
    font-size: 23px;
    font-weight: 540;
    line-height: 31px;
    width: 144px;
    box-sizing: border-box;
    white-space: nowrap;
}

.market {
    margin-left: 15px;
    font-size: 23.7px;
}

.index i {
    border: 7px solid transparent;
    border-top: 0;
    border-bottom: 7px solid #666;
    margin: 0 0 5px;
}

.item {
    display: flex;
    flex-direction: column;
    align-items: center;
    padding-top: 2px;
}

.item svg {
    fill: none;
    stroke: #666;
    stroke-width: 1.8;
}

.item span {
    margin-top: 5px;
    line-height: 30px;
}

.home {
    grid-column: 1 / -1;
    justify-self: center;
    width: 274px;
    height: 9px;
    border-radius: 5px;
    background: #000;
}
</style>
